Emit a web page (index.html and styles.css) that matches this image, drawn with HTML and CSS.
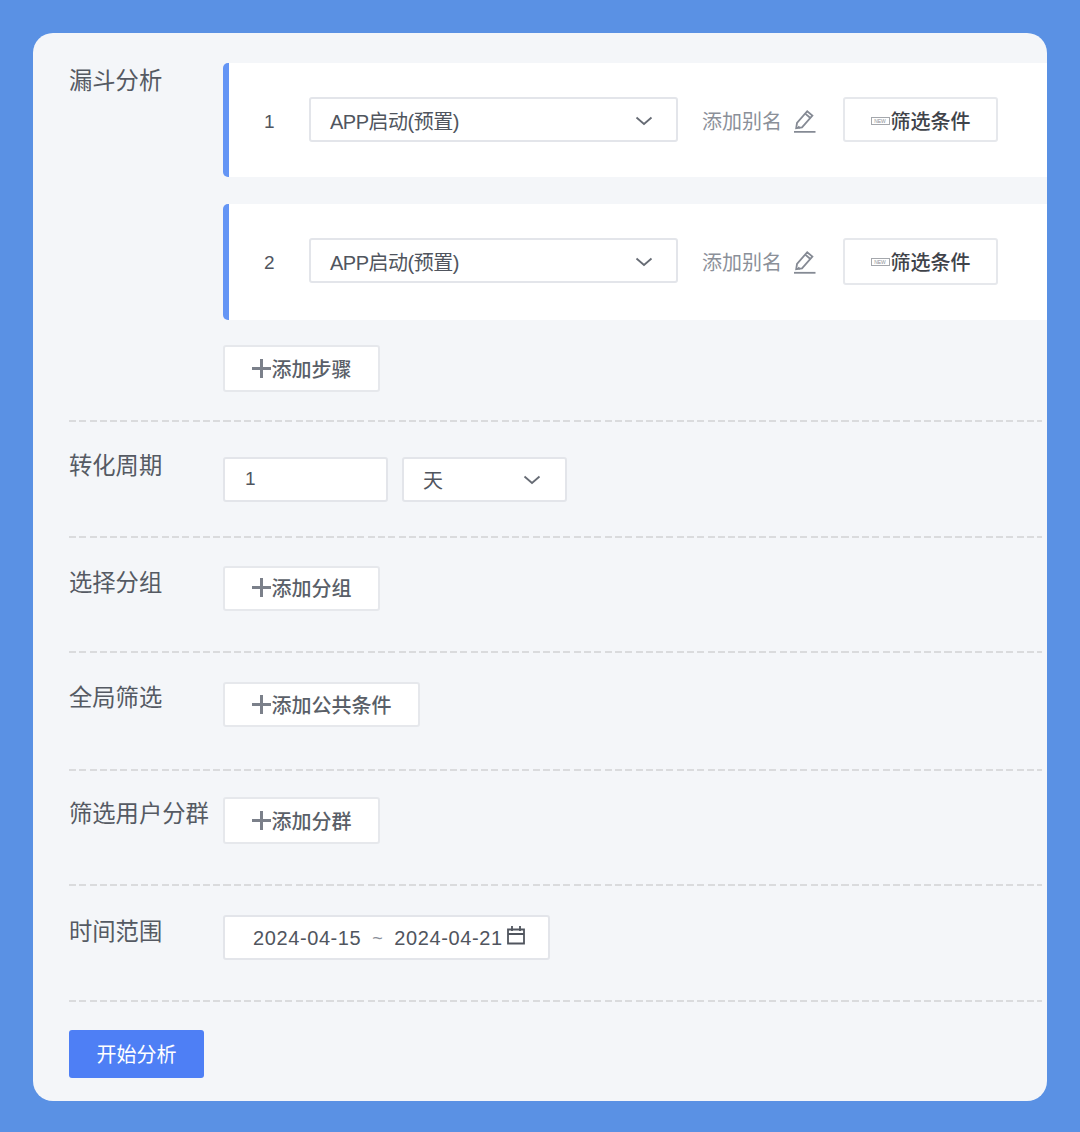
FILE: index.html
```html
<!DOCTYPE html>
<html lang="zh">
<head>
<meta charset="utf-8">
<title>漏斗分析</title>
<link rel="stylesheet" href="styles.css">
</head>
<body>
<main class="panel">
  <section class="row row-funnel">
    <div class="label">漏斗分析</div>
    <div class="content steps">
      <div class="step">
        <span class="step-no">1</span>
        <div class="field select event"><span>APP启动(预置)</span><svg class="chev" viewBox="0 0 18 10"><path d="M1.500 1.500 9 8l7.500-6.500"/></svg></div>
        <span class="alias">添加别名</span>
        <svg class="pencil" viewBox="0 0 24 24"><path d="M4.200 19.200 5 14 15.200 2.200l5.200 4.400L10 18.300z"/><path d="m13.200 4.600 5.200 4.400"/><path d="M6 17.500 8 19"/><path d="M2 22.800H23.500"/></svg>
        <button class="btn filter"><span class="new">NEW</span>筛选条件</button>
      </div>
      <div class="step step-second">
        <span class="step-no">2</span>
        <div class="field select event"><span>APP启动(预置)</span><svg class="chev" viewBox="0 0 18 10"><path d="M1.500 1.500 9 8l7.500-6.500"/></svg></div>
        <span class="alias">添加别名</span>
        <svg class="pencil" viewBox="0 0 24 24"><path d="M4.200 19.200 5 14 15.200 2.200l5.200 4.400L10 18.300z"/><path d="m13.200 4.600 5.200 4.400"/><path d="M6 17.500 8 19"/><path d="M2 22.800H23.500"/></svg>
        <button class="btn filter tall"><span class="new">NEW</span>筛选条件</button>
      </div>
      <button class="btn add tall"><span class="plus"></span>添加步骤</button>
    </div>
  </section>
  <section class="row row-period">
    <div class="label">转化周期</div>
    <div class="content inline">
      <div class="field num"><span>1</span></div>
      <div class="field select unit"><span>天</span><svg class="chev" viewBox="0 0 18 10"><path d="M1.500 1.500 9 8l7.500-6.500"/></svg></div>
    </div>
  </section>
  <section class="row row-group">
    <div class="label">选择分组</div>
    <div class="content"><button class="btn add raised"><span class="plus"></span>添加分组</button></div>
  </section>
  <section class="row row-global">
    <div class="label">全局筛选</div>
    <div class="content"><button class="btn add wide"><span class="plus"></span>添加公共条件</button></div>
  </section>
  <section class="row row-cohort">
    <div class="label">筛选用户分群</div>
    <div class="content"><button class="btn add tall"><span class="plus"></span>添加分群</button></div>
  </section>
  <section class="row row-time">
    <div class="label">时间范围</div>
    <div class="content">
      <div class="field date">
        <span class="d">2024-04-15</span><span class="tilde">~</span><span class="d">2024-04-21</span>
        <svg class="cal" viewBox="0 0 18 20"><path d="M1 4.500h16v14H1zM1 9h16M5 1v5M13 1v5"/></svg>
      </div>
    </div>
  </section>
  <button class="start">开始分析</button>
</main>
</body>
</html>
```

FILE: styles.css
```css
* { box-sizing: border-box; }
html, body { margin: 0; height: 100%; }
body {
  background: #5a91e4;
  padding: 33px 33px 31px;
  font-family: "Liberation Sans", "Noto Sans CJK SC", sans-serif;
  color: #555a63;
}
.panel {
  height: 1068px;
  background: #f4f6f9;
  border-radius: 20px;
  overflow: hidden;
  padding: 0 5px 0 36px;
}
.row {
  display: flex;
  background: repeating-linear-gradient(90deg, #dadbdd 0 7px, transparent 7px 10.300px) left bottom / 100% 2px no-repeat;
}
.label {
  width: 154px;
  flex: none;
  font-size: 23.300px;
  line-height: 32px;
  white-space: nowrap;
}
.content { flex: 1; min-width: 0; }
.inline { display: flex; gap: 14px; }

.row-funnel { height: 389px; padding-top: 30px; }
.row-funnel .label { margin-top: 2px; }
.row-period { height: 116px; padding-top: 35px; }
.row-period .label { margin-top: -7px; }
.row-group { height: 115px; padding-top: 28px; }
.row-group .label { margin-top: 1px; }
.row-global { height: 118px; padding-top: 29px; }
.row-global .label { margin-top: 0; }
.row-cohort { height: 115px; padding-top: 26px; }
.row-cohort .label { margin-top: 1px; }
.row-time { height: 116px; padding-top: 29px; }
.row-time .label { margin-top: 1px; }

.steps { margin-right: -5px; }
.step {
  height: 114px;
  margin-bottom: 27px;
  padding-top: 34px;
  background: #fff;
  border-left: 6px solid #6495f5;
  border-radius: 5px 0 0 5px;
  display: flex;
  align-items: flex-start;
}
.step-second { height: 116px; margin-bottom: 25px; }
.step-no {
  width: 80px;
  height: 45px;
  flex: none;
  display: flex;
  align-items: center;
  padding: 5px 0 0 35px;
  font-size: 19px;
  color: #50555e;
}
.field {
  height: 45px;
  background: #fff;
  border: 2px solid #e3e5ea;
  border-radius: 3px;
  display: flex;
  align-items: center;
  font-size: 20px;
  color: #50555e;
  white-space: nowrap;
}
.select { justify-content: space-between; }
.event { width: 369px; padding: 2px 23px 0 19px; letter-spacing: -0.500px; }
.chev { width: 18px; height: 10px; fill: none; stroke: #666b74; stroke-width: 1.800; }
.alias {
  margin-left: 24px;
  width: 81px;
  height: 45px;
  flex: none;
  display: flex;
  align-items: center;
  padding-top: 1px;
  font-size: 20px;
  color: #8b9099;
  white-space: nowrap;
}
.pencil {
  width: 24px;
  height: 24px;
  margin: 12px 0 0 9px;
  flex: none;
  fill: none;
  stroke: #858a94;
  stroke-width: 1.800;
}
.btn {
  height: 45px;
  padding: 0;
  background: #fff;
  border: 2px solid #e6e8ec;
  border-radius: 3px;
  display: flex;
  align-items: center;
  justify-content: center;
  font: inherit;
  font-size: 20px;
  font-weight: 500;
  color: #5a5f68;
}
.tall { height: 47px; }
.raised { padding-bottom: 3px; }
.filter { width: 155px; margin-left: 27px; padding-top: 2px; color: #3f434a; }
.filter.tall { padding-top: 0; }
.new {
  width: 19px;
  height: 8px;
  margin-right: 1px;
  border: 1px solid #a4a7ac;
  font-size: 5px;
  line-height: 6px;
  text-align: center;
  font-weight: 400;
  color: #8d9096;
}
.add { width: 157px; }
.wide { width: 197px; }
.plus {
  width: 19px;
  height: 19px;
  margin-right: 1px;
  background:
    linear-gradient(#7b808a, #7b808a) center / 19px 3px no-repeat,
    linear-gradient(#7b808a, #7b808a) center / 3px 19px no-repeat;
}
.num { width: 165px; padding: 0 0 2px 20px; font-size: 19px; }
.unit { width: 165px; padding: 0 24px 0 19px; }
.date { width: 327px; padding: 2px 0 0 28px; }
.d { letter-spacing: 0.600px; }
.tilde { margin: 0 11.500px 0 11px; color: #8b9099; font-size: 18px; }
.cal {
  width: 18px;
  height: 20px;
  margin: -7px 0 0 4.500px;
  fill: none;
  stroke: #50555e;
  stroke-width: 1.800;
}
.start {
  display: block;
  width: 135px;
  height: 48px;
  margin-top: 28px;
  padding: 0 0 2px;
  background: #4e7ff5;
  border: 0;
  border-radius: 3px;
  font: inherit;
  font-size: 20px;
  color: #fff;
}
```
